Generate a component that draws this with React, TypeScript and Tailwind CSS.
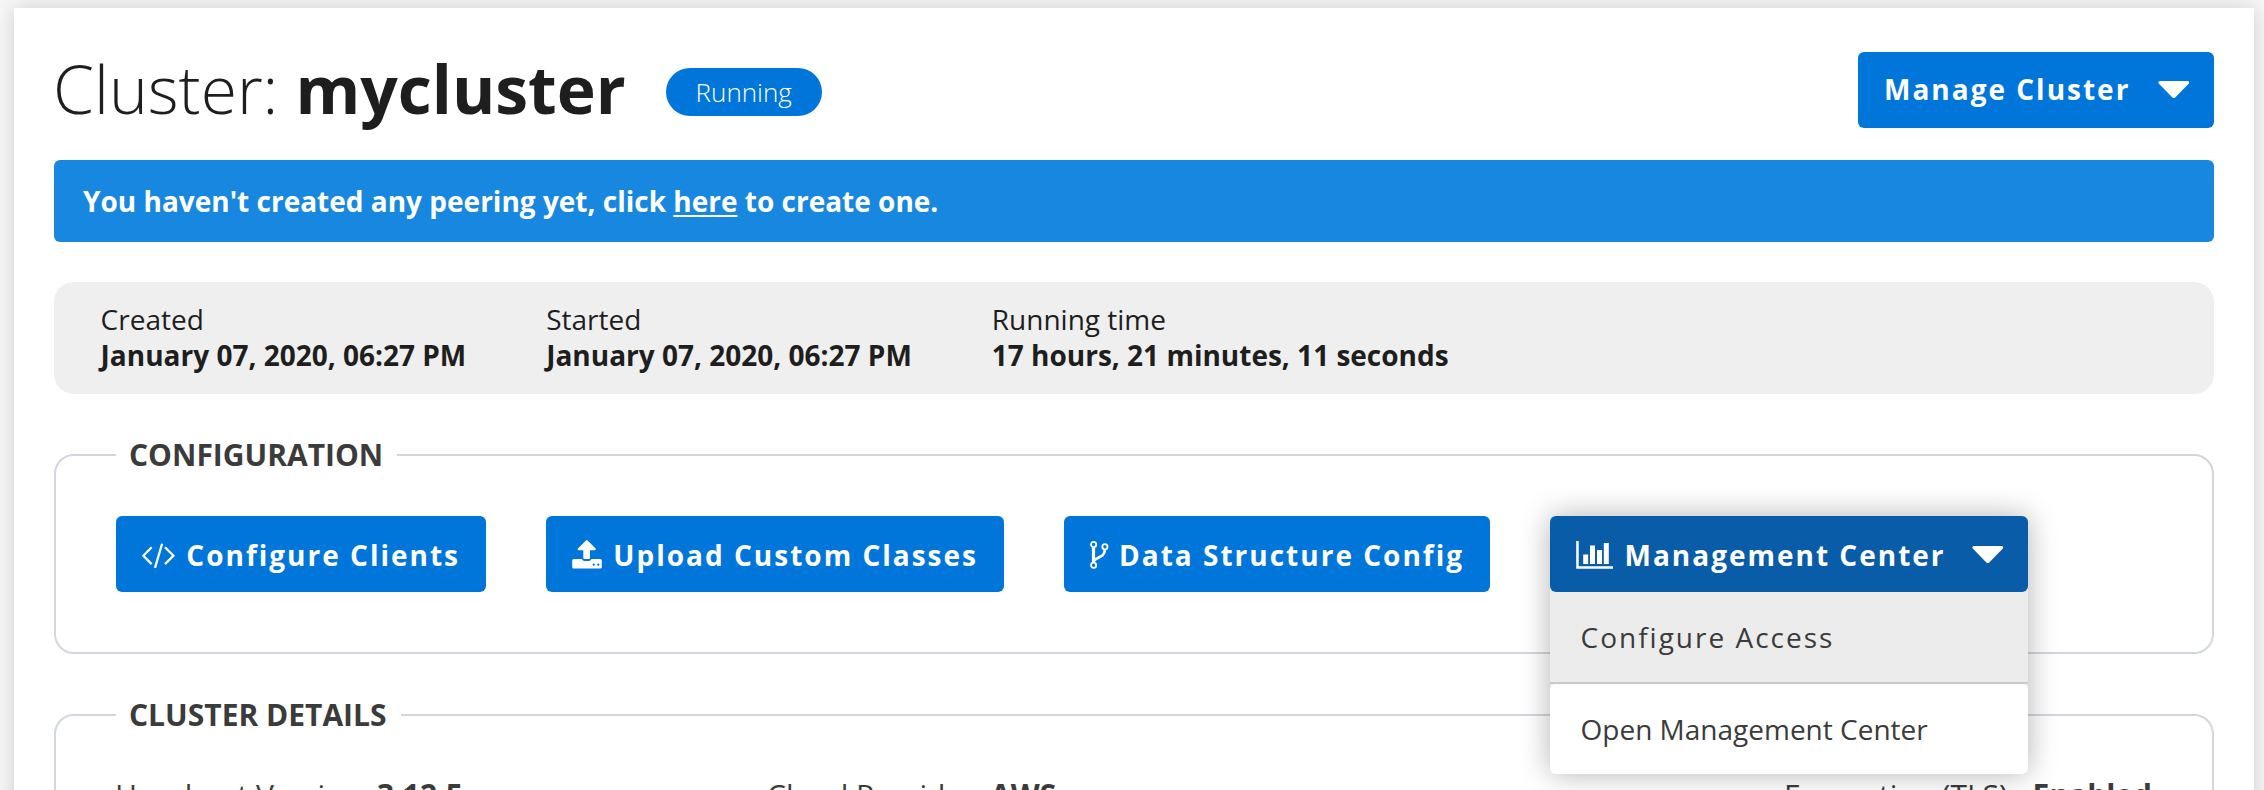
import type { ReactNode } from "react";

function Caret() {
  return (
    <svg className="h-[18px] w-8 shrink-0" viewBox="0 0 32 18" fill="currentColor">
      <path d="M2 0H29.6Q31.4 .2 31.2 1.8Q31 2.5 30.4 3.1L17.2 16.4Q15.8 17.8 14.4 16.4L1.2 3.1Q.3 2.2 .3 1.4Q.6 .1 2 0Z" />
    </svg>
  );
}

function CodeIcon() {
  return (
    <svg className="mt-[3px] h-7 w-[34px] shrink-0" viewBox="0 0 34 28" fill="none" stroke="currentColor" strokeWidth="2.3">
      <path d="M9.7 5.2L1.3 13.7L9.7 22.1M23 5.2L31.4 13.7L23 22.1" />
      <path d="M20.1 1.8L13 25.9" />
    </svg>
  );
}

function UploadIcon() {
  return (
    <svg className="mt-[2px] h-[30px] w-[30px] shrink-0" viewBox="0 0 30 30" fill="currentColor">
      <path d="M14 .4Q14.8-.3 15.6 .4L23.6 8.6Q24.3 10 22.7 10.3H18V17.7Q18 19 16.7 19H12.6Q11.3 19 11.3 17.7V10.3H6.8Q5.2 10 6 8.6Z" />
      <path
        fillRule="evenodd"
        d="M1.8 19H9.9Q10.7 21 12.5 21H16.8Q18.7 21 19.5 19H28.2Q29.8 19 29.8 20.6V26.9Q29.8 28.6 28.2 28.6H1.8Q.2 28.6 .2 26.9V20.6Q.2 19 1.8 19ZM21.7 23.6A1.1 1.1 0 1 0 21.7 25.8A1.1 1.1 0 1 0 21.7 23.6ZM26.3 23.6A1.1 1.1 0 1 0 26.3 25.8A1.1 1.1 0 1 0 26.3 23.6Z"
      />
    </svg>
  );
}

function BranchIcon() {
  return (
    <svg className="mt-[2px] h-7 w-[19px] shrink-0" viewBox="0 0 19 28" fill="none" stroke="currentColor" strokeWidth="1.8">
      <circle cx="3.6" cy="3.5" r="2.6" />
      <circle cx="3.6" cy="24.2" r="2.6" />
      <circle cx="14.9" cy="5.8" r="2.6" />
      <path d="M3.5 6.4V21.4" strokeWidth="3.2" />
      <path d="M14.9 8.6C14.8 16.8 6.2 16 4.2 19.6" strokeWidth="2.7" />
    </svg>
  );
}

function ChartIcon() {
  return (
    <svg className="mt-[2px] h-7 w-[37px] shrink-0" viewBox="0 0 37 28" fill="currentColor">
      <path d="M.2 0H2.7V25.2H37V27.8H.2Z" />
      <path d="M7.2 13.5H12.2V23H7.2ZM14 4.4H19V23H14ZM21 9H26V23H21ZM27.8 2H32.8V23H27.8Z" />
    </svg>
  );
}

function ActionButton({ icon, label, className }: { icon: ReactNode; label: string; className: string }) {
  return (
    <button className={`flex h-[76px] items-center justify-between rounded-[6px] bg-[#0076db] px-[26px] text-white ${className}`}>
      {icon}
      <span className="pt-[2px] font-bold tracking-[2px] whitespace-nowrap">{label}</span>
    </button>
  );
}

function Section({ title, children }: { title: string; children: ReactNode }) {
  return (
    <fieldset className="mt-10 rounded-[20px] border-2 border-[#d2d7dd] px-[60px]">
      <legend className="pr-[14px] pl-[13px] text-[30px] leading-[42px] font-bold">{title}</legend>
      {children}
    </fieldset>
  );
}

function Stat({ label, value }: { label: string; value: string }) {
  return (
    <div className="w-[445.6px] whitespace-nowrap">
      <div>{label}</div>
      <div className="font-bold">{value}</div>
    </div>
  );
}

export default function App() {
  return (
    <div className="h-[790px] overflow-hidden bg-[#f7f7f7] pt-2 pr-[10px] pl-[14px] font-['Open_Sans',sans-serif] text-[28px] leading-9 text-[#3b3b3b]">
      <main className="h-[860px] bg-white px-10 pt-11 shadow-[0_0_20px_rgba(0,0,0,0.17)]">
        <header className="flex h-[76px] items-center text-[#1e1e1e]">
          <h1 className="-ml-px pb-[5px] text-[66px] leading-[70px] font-light whitespace-pre">
            Cluster: <strong className="font-bold">mycluster</strong>
          </h1>
          <span className="mt-1 ml-10 flex h-12 w-[156px] items-center justify-center rounded-full bg-[#0076db] text-[26px] font-light text-white">
            Running
          </span>
          <button className="ml-auto flex h-[76px] w-[356px] items-center justify-between rounded-[6px] bg-[#0076db] pr-6 pl-[26px] text-white">
            <span className="pb-[2px] font-bold tracking-[2px]">Manage Cluster</span>
            <Caret />
          </button>
        </header>

        <p className="mt-8 flex h-[82px] items-center rounded-[6px] bg-[#1887df] px-[29px] font-bold whitespace-pre text-white">
          You haven't created any peering yet, click{" "}
          <a href="#" className="underline decoration-2 underline-offset-[3px]">here</a> to create one.
        </p>

        <div className="mt-10 flex h-[112px] rounded-[20px] bg-[#efefef] pt-[19px] pl-[46.6px] text-[#1e1e1e]">
          <Stat label="Created" value="January 07, 2020, 06:27 PM" />
          <Stat label="Started" value="January 07, 2020, 06:27 PM" />
          <Stat label="Running time" value="17 hours, 21 minutes, 11 seconds" />
        </div>

        <Section title="CONFIGURATION">
          <div className="flex gap-[60px] pt-10 pb-[60px]">
            <ActionButton icon={<CodeIcon />} label="Configure Clients" className="w-[370px]" />
            <ActionButton icon={<UploadIcon />} label="Upload Custom Classes" className="w-[458px]" />
            <ActionButton icon={<BranchIcon />} label="Data Structure Config" className="w-[426px]" />
            <div className="relative z-10 h-[76px] w-[478px]">
              <div className="absolute inset-x-0 top-0 rounded-[6px] bg-[#ececec] shadow-[0_0_30px_rgba(0,0,0,0.3)]">
                <button className="flex h-[76px] w-full items-center rounded-[6px] bg-[#095ca8] pr-6 pl-[26px] text-white">
                  <ChartIcon />
                  <span className="ml-[11.5px] pt-[2px] font-bold tracking-[2px]">Management Center</span>
                  <span className="mt-[2px] ml-auto flex">
                    <Caret />
                  </span>
                </button>
                <div className="flex h-[92px] items-center border-b-2 border-[#c4c9ce] px-[30.5px] tracking-[2px]">Configure Access</div>
                <div className="flex h-[90px] items-center rounded-[6px] bg-white px-[30.5px]">Open Management Center</div>
              </div>
            </div>
          </div>
        </Section>

        <Section title="CLUSTER DETAILS">
          <div className="-ml-px flex pt-[41px] pb-10 text-[30px] leading-9 whitespace-nowrap">
            <div className="w-[652px]">
              Hazelcast Version: <strong>3.12.5</strong>
            </div>
            <div className="w-[1017px]">
              Cloud Provider: <strong>AWS</strong>
            </div>
            <div>
              Encryption (TLS): <strong className="ml-[9px]">Enabled</strong>
            </div>
          </div>
        </Section>
      </main>
    </div>
  );
}
